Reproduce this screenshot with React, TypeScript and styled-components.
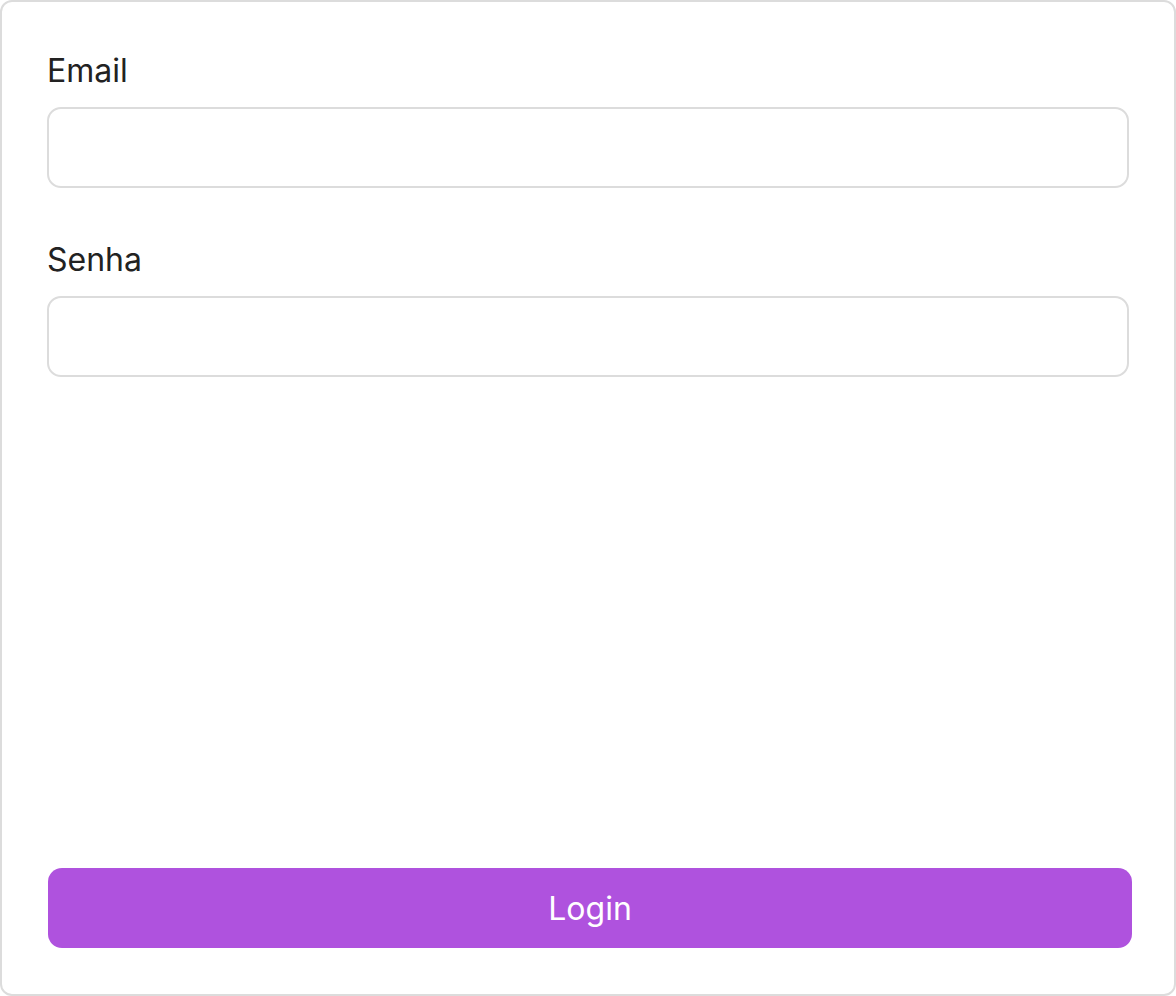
import { useState } from 'react'
import styled, { createGlobalStyle } from 'styled-components'

const GlobalStyle = createGlobalStyle`
  html, body {
    margin: 0;
    padding: 0;
    background: #ffffff;
  }

  body {
    font-family: Inter, 'Noto Sans', sans-serif;
  }
`

const App = () => {
  const [email, setEmail] = useState('')
  const [password, setPassword] = useState('')

  return (
    <>
      <GlobalStyle />
      <Card onSubmit={(e) => e.preventDefault()}>
        <Field>
          <Label htmlFor="email">Email</Label>
          <Input id="email" type="email" value={email} onChange={(e) => setEmail(e.target.value)} />
        </Field>
        <Field>
          <Label htmlFor="senha">Senha</Label>
          <Input id="senha" type="password" value={password} onChange={(e) => setPassword(e.target.value)} />
        </Field>
        <LoginButton type="submit">Login</LoginButton>
      </Card>
    </>
  )
}

const Card = styled.form`
  box-sizing: border-box;
  display: flex;
  flex-direction: column;
  gap: 50px;
  width: 1176px;
  height: 996px;
  padding: 47px 42px 46px 45px;
  border: 2px solid #dcdcdc;
  border-radius: 12px;
  background: #ffffff;
`

const Field = styled.div`
  display: flex;
  flex-direction: column;
  gap: 16px;
  width: 1082px;
`

const Label = styled.label`
  padding-top: 2px;
  font-size: 32px;
  line-height: 40px;
  color: #222222;
`

const Input = styled.input`
  box-sizing: border-box;
  height: 81px;
  width: 100%;
  border: 2px solid #dcdcdc;
  border-radius: 14px;
  padding: 0 20px;
  font-family: Inter, sans-serif;
  font-size: 28px;
  outline: none;
  background: #ffffff;
`

const LoginButton = styled.button`
  margin-top: auto;
  height: 80px;
  width: 1084px;
  margin-left: 1px;
  border: none;
  border-radius: 14px;
  background: #af52de;
  color: #ffffff;
  font-family: Inter, sans-serif;
  font-size: 32px;
  cursor: pointer;
`

export default App
